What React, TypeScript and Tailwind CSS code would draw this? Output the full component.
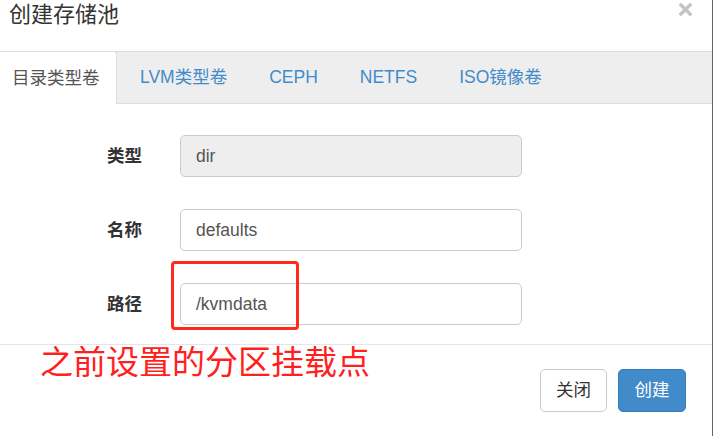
import React from "react";

const font = { fontFamily: '"Liberation Sans", Arial, "Noto Sans CJK SC", sans-serif' };

const tabs = ["LVM类型卷", "CEPH", "NETFS", "ISO镜像卷"];

function Field({ label, value, disabled }: { label: string; value: string; disabled?: boolean }) {
  return (
    <div className="flex items-center">
      <label className="w-[73px] text-[17.5px] font-bold text-[#333]">{label}</label>
      <div
        className={
          "w-[342px] h-[42px] rounded-[5px] border border-[#ccc] px-[15px] flex items-center text-[17.5px] text-[#555] " +
          (disabled ? "bg-[#eee]" : "bg-white")
        }
      >
        {value}
      </div>
    </div>
  );
}

export default function App() {
  return (
    <div
      className="relative w-[713px] h-[436px] overflow-hidden bg-white border-r border-[#666]"
      style={font}
    >
      {/* Header */}
      <div className="h-[51px] flex items-start justify-between pl-[9px] pr-[20px]">
        <h4 className="text-[22px] leading-[30px] text-[#333]">创建存储池</h4>
        <svg width="13" height="13" viewBox="0 0 13 13" className="mt-[3px]">
          <path d="M2 2 L11 11 M11 2 L2 11" stroke="#c4c4c4" strokeWidth="3.4" strokeLinecap="square" />
        </svg>
      </div>

      {/* Tabs */}
      <div className="h-[53px] flex items-stretch bg-[#eee] border-t border-b border-[#ddd]">
        <div className="w-[117px] -mt-px -mb-px pl-3 flex items-center bg-white border-t border-r border-[#ddd] rounded-tr-[4px] text-[17.5px] text-[#555]">
          目录类型卷
        </div>
        <div className="flex items-center ml-[4px]">
          {tabs.map((t) => (
            <span key={t} className="px-[19px] mr-[4px] text-[17.5px] text-[#428bca]">
              {t}
            </span>
          ))}
        </div>
      </div>

      {/* Body */}
      <div className="pl-[107px] pt-[31px] pb-[19px] flex flex-col gap-[32px]">
        <Field label="类型" value="dir" disabled />
        <Field label="名称" value="defaults" />
        <Field label="路径" value="/kvmdata" />
      </div>

      {/* Annotation box */}
      <div className="absolute left-[171px] top-[261px] w-[128px] h-[69px] border-[3px] border-[#ff2a1a] rounded-[4px]" />

      {/* Footer */}
      <div className="relative border-t border-[#e5e5e5] pt-[24px] pr-[26px] flex justify-end gap-[11px]">
        <span className="absolute left-[40px] top-[-2px] text-[33px] leading-[40px] text-[#ff1f1f]">
          之前设置的分区挂载点
        </span>
        <button className="w-[67px] h-[43px] rounded-[5px] border border-[#ccc] bg-white text-[17.5px] text-[#333]">
          关闭
        </button>
        <button className="w-[68px] h-[43px] rounded-[5px] border border-[#357ebd] bg-[#428bca] text-[17.5px] text-white">
          创建
        </button>
      </div>
    </div>
  );
}
